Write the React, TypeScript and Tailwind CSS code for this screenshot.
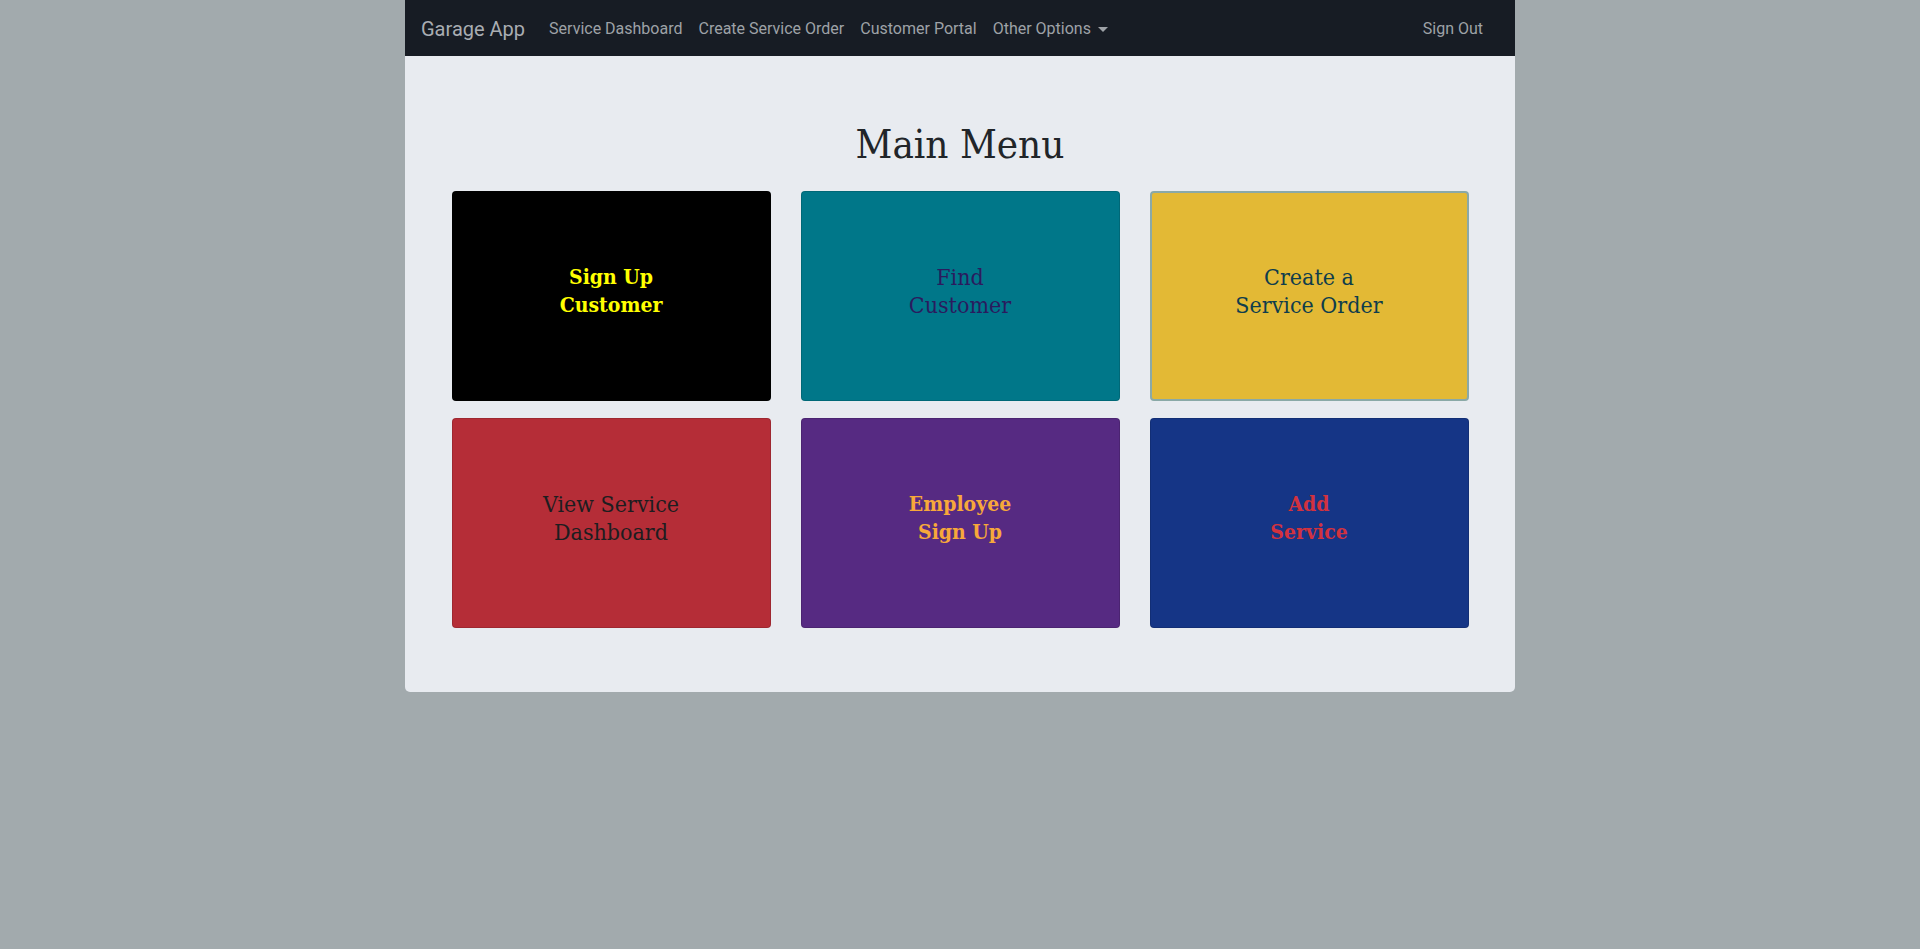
const NAV_LINKS = ['Service Dashboard', 'Create Service Order', 'Customer Portal'];

const TILES = [
  { label: ['Sign Up', 'Customer'], card: 'bg-black border-[rgba(0,0,0,0.125)]', text: 'text-[#ffff00] font-bold text-[21px]' },
  { label: ['Find', 'Customer'], card: 'bg-[#007789] border-[rgba(0,0,0,0.125)]', text: 'text-[#2a1b5e] text-[23px]' },
  { label: ['Create a', 'Service Order'], card: 'bg-[#e3b935] border-2 border-[#8aa9a7]', text: 'text-[#0f3d4c] text-[23px]' },
  { label: ['View Service', 'Dashboard'], card: 'bg-[#b52d37] border-[rgba(0,0,0,0.125)]', text: 'text-[#1d1d20] text-[23px]' },
  { label: ['Employee', 'Sign Up'], card: 'bg-[#562a82] border-[rgba(0,0,0,0.125)]', text: 'text-[#f7a83a] font-bold text-[21px]' },
  { label: ['Add', 'Service'], card: 'bg-[#153586] border-[rgba(0,0,0,0.125)]', text: 'text-[#d2323f] font-bold text-[21px]' },
];

const serif = 'font-["DejaVu_Serif_Condensed","DejaVu_Serif","Liberation_Serif",serif]';

export default function App() {
  return (
    <div className="min-h-screen bg-[#a2aaad]">
      <div className="mx-auto w-[1110px] bg-[#e8ebf0] rounded-b-[5px]">
        <nav className="h-14 bg-[#171c24] flex items-center px-4 pt-[2px] font-['Roboto',sans-serif]">
          <span className="text-[20px] text-[#a9adb2] mr-4 leading-[30px]">Garage App</span>
          {NAV_LINKS.map((l) => (
            <a key={l} className="px-2 text-[16px] text-[#9ea2a7] leading-6 cursor-pointer">
              {l}
            </a>
          ))}
          <a className="px-2 text-[16px] text-[#9ea2a7] leading-6 flex items-center cursor-pointer">
            Other Options
            <span className="ml-[7px] mt-[1px] w-0 h-0 border-t-[5px] border-t-[#9ea2a7] border-x-[5px] border-x-transparent" />
          </a>
          <a className="ml-auto mr-2 px-2 text-[16px] text-[#9ea2a7] leading-6 cursor-pointer">Sign Out</a>
        </nav>

        <div className="pt-16 pb-16">
          <h1 className={`${serif} text-center text-[40px] leading-[48px] text-[#212529] mb-[23px]`}>Main Menu</h1>
          <div className="grid grid-cols-[repeat(3,319px)] justify-center gap-x-[30px] gap-y-[17px]">
            {TILES.map((t) => (
              <div
                key={t.label.join(' ')}
                className={`h-[210px] rounded-[4px] border flex items-center justify-center cursor-pointer ${t.card}`}
              >
                <div className={`${serif} text-center leading-[28px] pb-[10px] ${t.text}`}>
                  {t.label[0]}
                  <br />
                  {t.label[1]}
                </div>
              </div>
            ))}
          </div>
        </div>
      </div>
    </div>
  );
}
